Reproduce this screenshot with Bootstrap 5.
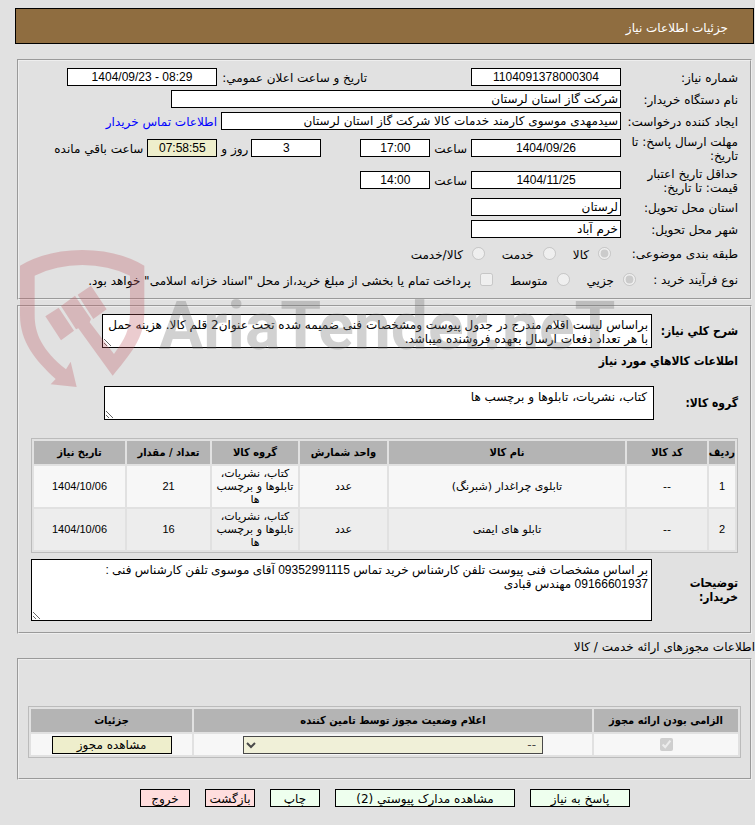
<!DOCTYPE html>
<html lang="fa" dir="rtl">
<head>
<meta charset="utf-8">
<meta name="viewport" content="width=device-width, initial-scale=1">
<title>جزئیات اطلاعات نیاز</title>
<link rel="stylesheet" href="https://cdn.jsdelivr.net/npm/bootstrap@5.3.0/dist/css/bootstrap.min.css">
<style>
body{background:#e1e1e1;color:#000;font:12px/14px "DejaVu Sans",sans-serif;padding:8px 0 18px 15px}
.page-title{background:#8f6d40;color:#fff;border:1px solid #000;height:36px;padding:3px 25px 0;margin:0 1px 15px 0;font-size:12px;line-height:14px}
.panel{border:2px groove #eee;margin:0 3px 0 2px}
.panel-need{padding:5px 12px 6px;margin-bottom:5px}
.panel-goods{padding:7px 12px 11px}
.panel-permit{padding:46px 9px 20px}
.line{min-height:22px}
.line-double{min-height:32px}
.line-options{min-height:26px}
.cap{width:115px;flex:none;margin-left:2px;padding-top:1px}
.cap-second{width:148px;margin-right:104px}
.cap-option{margin-left:12px}
.cap-process{width:102px;margin-left:0}
.cap-area{width:86px;flex:none;font-weight:700;font-family:"DejaVu Sans Condensed","DejaVu Sans",sans-serif}
.cap-group{width:84px}
.box{height:18px;border:1px solid #000;border-radius:0;background:#fff;color:#000;padding:0 2px;font-size:12px;line-height:14px;min-width:0}
.num{font-family:"Liberation Sans","DejaVu Sans",sans-serif;text-align:center}
.w-date{width:150px;flex:none}
.w-time{width:70px;flex:none}
.w-name{width:450px}
.w-person{width:400px}
.yellow{background:#eec}
.unit{padding:2px 4px 0}
.unit-day{padding:2px 3px 0 4px}
.gap-day{margin-right:39px}
.contact{color:#00f;text-decoration:none;margin-right:4px;padding-top:1px}
.option{display:flex;align-items:center;gap:9px;margin-left:17px;white-space:nowrap}
.option span{padding-top:4px}
.option input{margin:0}
.area{border:1px solid #000;background:#fff;color:#000;padding:3px 3px 0;height:34px;line-height:14px;font-size:12px;resize:both;min-width:0;overflow:hidden;flex:0 1 550px}
.area-group{padding-right:6px}
.area-notes{height:62px;flex:1 1 auto;font-family:"Liberation Sans","DejaVu Sans",sans-serif}
.goods-title{font:700 12px/18px "DejaVu Sans Condensed","DejaVu Sans",sans-serif;margin:4px 0 16px}
.grid{border:1px solid #bbb;border-collapse:separate;border-spacing:2px;width:100%;font-size:11px;line-height:13px;text-align:center;table-layout:fixed}
.grid th{background:#b4b4b4;height:23px;padding:0;text-align:center;font:700 11px/13px "DejaVu Sans Condensed","DejaVu Sans",sans-serif}
.grid td{background:#f7f7f7;padding:1px;height:41px}
.grid tr:nth-child(even) td{background:#ededed}
.grid .num{font-family:"Liberation Sans","DejaVu Sans",sans-serif}
.goods{margin:18px 0 6px}
.c-row{width:26px}.c-code{width:80px}.c-name{width:236px}.c-unit{width:87px}.c-group{width:86px}.c-count{width:83px}.c-date{width:91px}
.c-must{width:144px}.c-state{width:398px}.c-view{width:161px}
.permits td{height:21px;padding:0}
.permits .box,.permits input,.permits .act{display:block;margin:0 auto}
.permit-title{margin:6px 0 3px;line-height:15px;font-size:12px}
.w-select,.w-select:disabled{width:300px;max-width:100%;opacity:.7}
.act{height:18px;border:1px solid #000;border-radius:0;padding:1px 0 0;font-size:12px;line-height:14px;color:#000;white-space:nowrap}
.actions{gap:15px;margin-top:9px}
.act-green{background:#efe}
.act-red{background:#fdd}
.w50{width:50px}.w100{width:100px}.w120{width:120px}.w180{width:180px}
.watermark{position:absolute;left:15px;top:245px;width:620px;height:145px;pointer-events:none;opacity:.3}
.watermark text{font:700 66px Roboto,"Liberation Sans",sans-serif;direction:ltr}
</style>
</head>
<body class="position-relative">
<h1 class="page-title d-flex align-items-center">جزئیات اطلاعات نیاز</h1>

<form>
<section class="panel panel-need">
  <div class="line d-flex align-items-center">
    <label class="cap" for="needNo">شماره نیاز:</label><input class="box num w-date" id="needNo" value="1104091378000304" readonly>
    <label class="cap cap-second" for="pubDate">تاریخ و ساعت اعلان عمومي:</label><input class="box num w-date" id="pubDate" dir="ltr" value="1404/09/23 - 08:29" readonly>
  </div>
  <div class="line d-flex align-items-center">
    <label class="cap" for="buyer">نام دستگاه خریدار:</label><input class="box w-name" id="buyer" value="شرکت گاز استان لرستان" readonly>
  </div>
  <div class="line d-flex align-items-center">
    <label class="cap" for="creator">ایجاد کننده درخواست:</label><input class="box w-person" id="creator" value="سیدمهدی موسوی کارمند خدمات کالا شرکت گاز استان لرستان" readonly>
    <a class="contact" href="#">اطلاعات تماس خریدار</a>
  </div>
  <div class="line line-double d-flex align-items-center">
    <label class="cap" for="replyDate">مهلت ارسال پاسخ: تا تاریخ:</label><input class="box num w-date" id="replyDate" value="1404/09/26" readonly>
    <label class="unit" for="replyTime">ساعت</label><input class="box num w-time" id="replyTime" value="17:00" readonly>
    <input class="box num w-time gap-day" id="days" value="3" readonly><label class="unit-day" for="days">روز و</label>
    <input class="box num w-time yellow" id="left" value="07:58:55" readonly><label class="unit" for="left">ساعت باقي مانده</label>
  </div>
  <div class="line line-double d-flex align-items-center">
    <label class="cap" for="priceDate">حداقل تاریخ اعتبار قیمت: تا تاریخ:</label><input class="box num w-date" id="priceDate" value="1404/11/25" readonly>
    <label class="unit" for="priceTime">ساعت</label><input class="box num w-time" id="priceTime" value="14:00" readonly>
  </div>
  <div class="line d-flex align-items-center">
    <label class="cap" for="province">استان محل تحویل:</label><input class="box w-date" id="province" value="لرستان" readonly>
  </div>
  <div class="line d-flex align-items-center">
    <label class="cap" for="city">شهر محل تحویل:</label><input class="box w-date" id="city" value="خرم آباد" readonly>
  </div>
  <div class="line line-options d-flex align-items-center">
    <span class="cap cap-option">طبقه بندی موضوعی:</span>
    <label class="option"><input type="radio" name="kind" checked disabled><span>کالا</span></label>
    <label class="option"><input type="radio" name="kind" disabled><span>خدمت</span></label>
    <label class="option"><input type="radio" name="kind" disabled><span>کالا/خدمت</span></label>
  </div>
  <div class="line line-options d-flex align-items-center">
    <span class="cap cap-process">نوع فرآیند خرید :</span>
    <label class="option"><input type="radio" name="process" checked disabled><span>جزیي</span></label>
    <label class="option"><input type="radio" name="process" disabled><span>متوسط</span></label>
    <label class="option"><input type="checkbox" disabled><span>پرداخت تمام یا بخشی از مبلغ خرید،از محل "اسناد خزانه اسلامی" خواهد بود.</span></label>
  </div>
</section>

<section class="panel panel-goods">
  <div class="d-flex align-items-center">
    <label class="cap-area" for="summary">شرح کلي نیاز:</label>
    <textarea class="area" id="summary" readonly>براساس لیست اقلام مندرج در جدول پیوست ومشخصات فنی ضمیمه شده تحت عنوان2 قلم کالا. هزینه حمل
با هر تعداد دفعات ارسال بعهده فروشنده میباشد.</textarea>
  </div>
  <h2 class="goods-title">اطلاعات کالاهاي مورد نیاز</h2>
  <div class="d-flex align-items-center">
    <label class="cap-area cap-group" for="group">گروه کالا:</label>
    <textarea class="area area-group" id="group" readonly>کتاب، نشریات، تابلوها و برچسب ها</textarea>
  </div>
  <table class="grid goods">
    <colgroup><col class="c-row"><col class="c-code"><col class="c-name"><col class="c-unit"><col class="c-group"><col class="c-count"><col class="c-date"></colgroup>
    <thead><tr><th>ردیف</th><th>کد کالا</th><th>نام کالا</th><th>واحد شمارش</th><th>گروه کالا</th><th>تعداد / مقدار</th><th>تاریخ نیاز</th></tr></thead>
    <tbody>
      <tr><td class="num">1</td><td>--</td><td>تابلوی چراغدار (شبرنگ)</td><td>عدد</td><td>کتاب، نشریات، تابلوها و برچسب ها</td><td class="num">21</td><td class="num">1404/10/06</td></tr>
      <tr><td class="num">2</td><td>--</td><td>تابلو های ایمنی</td><td>عدد</td><td>کتاب، نشریات، تابلوها و برچسب ها</td><td class="num">16</td><td class="num">1404/10/06</td></tr>
    </tbody>
  </table>
  <div class="d-flex align-items-center">
    <label class="cap-area" for="notes">توضیحات<br>خریدار:</label>
    <textarea class="area area-notes" id="notes" readonly>بر اساس مشخصات فنی پیوست تلفن کارشناس خرید تماس 09352991115 آقای موسوی تلفن کارشناس فنی : 
09166601937 مهندس قبادی</textarea>
  </div>
</section>

<h2 class="permit-title">اطلاعات مجوزهای ارائه خدمت / کالا</h2>
<section class="panel panel-permit">
  <table class="grid permits">
    <colgroup><col class="c-must"><col class="c-state"><col class="c-view"></colgroup>
    <thead><tr><th>الزامی بودن ارائه مجوز</th><th>اعلام وضعیت مجوز توسط تامین کننده</th><th>جزئیات</th></tr></thead>
    <tbody><tr>
      <td><input type="checkbox" aria-label="الزامی" checked disabled></td>
      <td><select class="box yellow w-select" aria-label="وضعیت مجوز" disabled><option>--</option></select></td>
      <td><button type="button" class="act yellow w120">مشاهده مجوز</button></td>
    </tr></tbody>
  </table>
</section>

<div class="actions d-flex justify-content-center">
  <button type="button" class="act act-green w100">پاسخ به نیاز</button>
  <button type="button" class="act act-green w180">مشاهده مدارک پیوستي (2)</button>
  <button type="button" class="act act-green w50">چاپ</button>
  <button type="button" class="act act-red w50">بازگشت</button>
  <button type="button" class="act act-red w50">خروج</button>
</div>
</form>

<svg class="watermark" viewBox="0 0 620 145" aria-hidden="true">
  <path transform="scale(.3333)" fill="#c05a62" d="M15 62Q95 15 202 15T388 62V200C388 270 365 305 293 392L190 250 183 253 138 183 180 152 228 222 224 232 297 327C330 280 345 255 345 200V92Q280 60 202 60T59 92V210C59 265 80 315 153 373L167 350 185 426 107 418 122 402C60 345 15 290 15 210ZM91 214L131 188 177 257 138 286ZM188 149L228 122 275 193 235 222Z"/>
  <text x="144" y="104" fill="#6b6b6b">AriaTender.neT</text>
</svg>
<script src="https://cdn.jsdelivr.net/npm/bootstrap@5.3.0/dist/js/bootstrap.bundle.min.js"></script>
</body>
</html>
